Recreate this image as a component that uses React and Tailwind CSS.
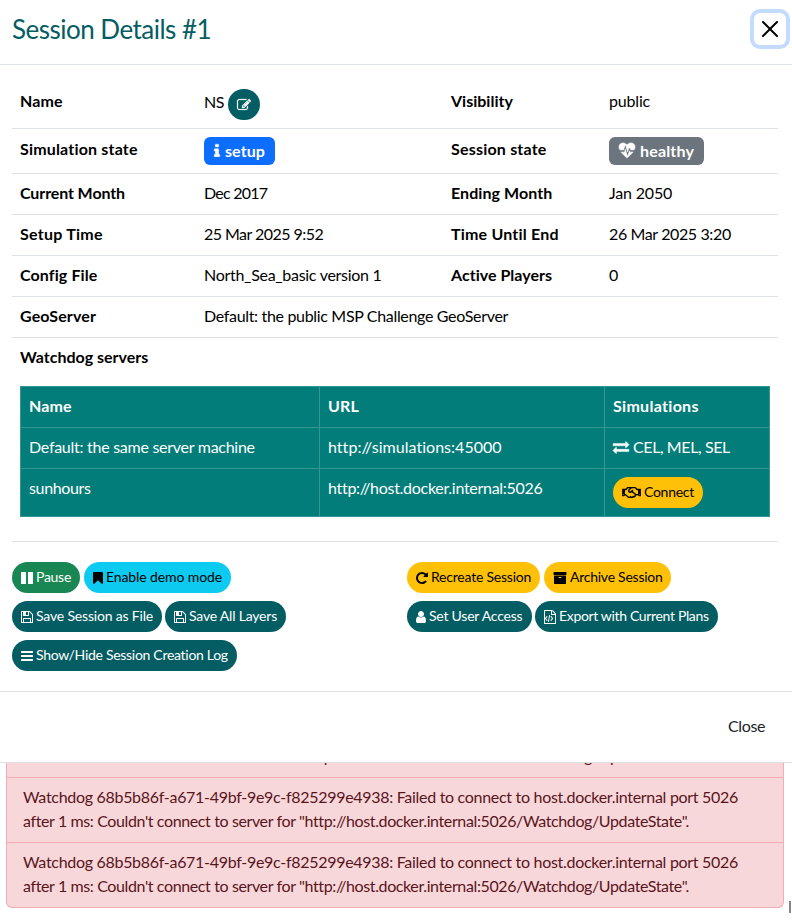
import React from "react";
import { FaRegHandshake } from "react-icons/fa";

const ICONS = {
  edit: { stroke: 30, box: "0 0 1792 1792", size: "w-[14px] h-[14px]", d: "M888 1184l116-116-152-152-116 116v56h96v96h56zm440-720q-16-16-33 1l-350 350q-17 17-1 33t33-1l350-350q17-17 1-33zm80 594v190q0 119-84.5 203.5t-203.5 84.5h-832q-119 0-203.5-84.5t-84.5-203.5v-832q0-119 84.5-203.5t203.5-84.5h832q63 0 117 25 15 7 18 23 3 17-9 29l-49 49q-14 14-32 8-23-6-45-6h-832q-66 0-113 47t-47 113v832q0 66 47 113t113 47h832q66 0 113-47t47-113v-126q0-13 9-22l64-64q15-15 35-7t20 29zm-96-738l288 288-672 672h-288v-288zm444 132l-92 92-288-288 92-92q28-28 68-28t68 28l152 152q28 28 28 68t-28 68z" },
  info: { stroke: 40, box: "576 0 640 1792", size: "w-[6px] h-[16px]", d: "M1216 1344v128q0 26-19 45t-45 19h-512q-26 0-45-19t-19-45v-128q0-26 19-45t45-19h64v-384h-64q-26 0-45-19t-19-45v-128q0-26 19-45t45-19h384q26 0 45 19t19 45v576h64q26 0 45 19t19 45zm-128-1152v192q0 26-19 45t-45 19h-256q-26 0-45-19t-19-45v-192q0-26 19-45t45-19h256q26 0 45 19t19 45z" },
  heart: { stroke: 70, box: "0 0 1792 1792", size: "w-[16px] h-[16px]", d: "M1280 1024h305q-5 6-10 10.5t-9 7.5l-3 4-623 600q-18 18-44 18t-44-18l-624-602q-5-2-21-20h369q22 0 39.5-13.5t22.5-34.5l70-281 190 667q6 20 23 33t39 13q21 0 38-13t23-33l146-485 56 112q18 35 57 35zm512-556q0 145-103 300h-369l-111-221q-8-17-25.5-27t-36.5-8q-45 5-56 46l-129 430-196-686q-6-20-23.5-33t-39.5-13-39 13.5-22 34.5l-116 464h-423q-103-155-103-300 0-220 127-344t351-124q62 0 126.5 21.5t120 58 95.5 68.5 76 68q36-36 76-68t95.5-68.5 120-58 126.5-21.5q224 0 351 124t127 344z" },
  exchange: { stroke: 50, box: "0 0 1792 1792", size: "w-[16px] h-[16px]", d: "M1792 1184v192q0 13-9.5 22.5t-22.5 9.5h-1376v192q0 13-9.5 22.5t-22.5 9.5q-12 0-24-10l-319-320q-9-9-9-22 0-14 9-23l320-320q9-9 23-9 13 0 22.5 9.5t9.5 22.5v192h1376q13 0 22.5 9.5t9.5 22.5zm0-544q0 14-9 23l-320 320q-9 9-23 9-13 0-22.5-9.5t-9.5-22.5v-192h-1376q-13 0-22.5-9.5t-9.5-22.5v-192q0-13 9.5-22.5t22.5-9.5h1376v-192q0-14 9-23t23-9q12 0 24 10l319 319q9 9 9 23z" },
  pause: { box: "128 0 1536 1792", size: "w-[12px] h-[14px]", d: "M1664 192v1408q0 26-19 45t-45 19h-512q-26 0-45-19t-19-45v-1408q0-26 19-45t45-19h512q26 0 45 19t19 45zm-896 0v1408q0 26-19 45t-45 19h-512q-26 0-45-19t-19-45v-1408q0-26 19-45t45-19h512q26 0 45 19t19 45z" },
  bookmark: { box: "256 0 1280 1792", size: "w-[10px] h-[14px]", d: "M1420 128q23 0 44 9 33 13 52.5 41t19.5 62v1289q0 34-19.5 62t-52.5 41q-19 8-44 8-48 0-83-32l-441-424-441 424q-36 33-83 33-23 0-44-9-33-13-52.5-41t-19.5-62v-1289q0-34 19.5-62t52.5-41q21-9 44-9h1048z" },
  save: { box: "128 0 1536 1792", size: "w-[12px] h-[14px]", d: "M512 1536h768v-384h-768v384zm896 0h128v-896q0-14-10-38.5t-20-34.5l-281-281q-10-10-34-20t-39-10v416q0 40-28 68t-68 28h-576q-40 0-68-28t-28-68v-416h-128v1280h128v-416q0-40 28-68t68-28h832q40 0 68 28t28 68v416zm-384-928v-320q0-13-9.5-22.5t-22.5-9.5h-192q-13 0-22.5 9.5t-9.5 22.5v320q0 13 9.5 22.5t22.5 9.5h192q13 0 22.5-9.5t9.5-22.5zm640 32v928q0 40-28 68t-68 28h-1344q-40 0-68-28t-28-68v-1344q0-40 28-68t68-28h928q40 0 88 20t76 48l280 280q28 28 48 76t20 88z" },
  bars: { box: "128 0 1536 1792", size: "w-[12px] h-[14px]", d: "M1664 1344v128q0 26-19 45t-45 19h-1408q-26 0-45-19t-19-45v-128q0-26 19-45t45-19h1408q26 0 45 19t19 45zm0-512v128q0 26-19 45t-45 19h-1408q-26 0-45-19t-19-45v-128q0-26 19-45t45-19h1408q26 0 45 19t19 45zm0-512v128q0 26-19 45t-45 19h-1408q-26 0-45-19t-19-45v-128q0-26 19-45t45-19h1408q26 0 45 19t19 45z" },
  repeat: { box: "128 0 1536 1792", size: "w-[12px] h-[14px]", d: "M1664 256v448q0 26-19 45t-45 19h-448q-42 0-59-40-17-39 14-69l138-138q-148-137-349-137-104 0-198.5 40.5t-163.5 109.5-109.5 163.5-40.5 198.5 40.5 198.5 109.5 163.5 163.5 109.5 198.5 40.5q119 0 225-52t179-147q7-10 23-12 15 0 25 9l137 138q9 8 9.5 20.5t-7.5 22.5q-109 132-264 204.5t-327 72.5q-156 0-298-61t-245-164-164-245-61-298 61-298 164-245 245-164 298-61q147 0 284.5 55.5t244.5 156.5l130-129q29-31 70-14 39 17 39 59z" },
  archive: { box: "0 0 1792 1792", size: "w-[14px] h-[14px]", d: "M1088 832q0-26-19-45t-45-19h-256q-26 0-45 19t-19 45 19 45 45 19h256q26 0 45-19t19-45zm576-192v960q0 26-19 45t-45 19h-1408q-26 0-45-19t-19-45v-960q0-26 19-45t45-19h1408q26 0 45 19t19 45zm64-448v256q0 26-19 45t-45 19h-1536q-26 0-45-19t-19-45v-256q0-26 19-45t45-19h1536q26 0 45 19t19 45z" },
  user: { box: "256 0 1280 1792", size: "w-[10px] h-[14px]", d: "M1536 1399q0 109-62.5 187t-150.5 78h-854q-88 0-150.5-78t-62.5-187q0-85 8.5-160.5t31.5-152 58.5-131 94-89 134.5-34.5q131 128 313 128t313-128q76 0 134.5 34.5t94 89 58.5 131 31.5 152 8.5 160.5zm-256-887q0 159-112.5 271.5t-271.5 112.5-271.5-112.5-112.5-271.5 112.5-271.5 271.5-112.5 271.5 112.5 112.5 271.5z" },
  code: { box: "128 0 1536 1792", size: "w-[12px] h-[14px]", d: "M1596 380q28 28 48 76t20 88v1152q0 40-28 68t-68 28h-1344q-40 0-68-28t-28-68v-1600q0-40 28-68t68-28h896q40 0 88 20t76 48zm-444-244v376h376q-10-29-22-41l-313-313q-12-12-41-22zm384 1528v-1024h-416q-40 0-68-28t-28-68v-416h-768v1536h1280zm-1056-896q8-11 21-12.5t24 6.5l51 38q11 8 12.5 21t-6.5 24l-182 243 182 243q8 11 6.5 24t-12.5 21l-51 38q-11 8-24 6.5t-21-12.5l-226-301q-14-19 0-38zm802 301q14 19 0 38l-226 301q-8 11-21 12.5t-24-6.5l-51-38q-11-8-12.5-21t6.5-24l182-243-182-243q-8-11-6.5-24t12.5-21l51-38q11-8 24-6.5t21 12.5zm-620 461q-13-2-20.5-13t-5.5-24l138-831q2-13 13-20.5t24-5.5l63 10q13 2 20.5 13t5.5 24l-138 831q-2 13-13 20.5t-24 5.5z" },
};

function Icon({ name }) {
  const icon = ICONS[name];
  return (
    <svg
      viewBox={icon.box}
      className={`${icon.size} shrink-0 overflow-visible`}
      fill="currentColor"
      stroke="currentColor"
      strokeWidth={icon.stroke || 0}
      aria-hidden="true"
    >
      <path d={icon.d} />
    </svg>
  );
}

function Row({ children, className = "[&>*]:pt-[7px] [&>*]:pb-[9px]" }) {
  return (
    <div className={`grid grid-cols-[184px_247px_158px_177px] border-b border-[#dee2e6] [&>*]:px-2 ${className}`}>
      {children}
    </div>
  );
}

function Pill({ icon, label, className }) {
  return (
    <button className={`flex h-[31px] items-center gap-[3px] whitespace-nowrap rounded-full pl-[9px] text-[14px] leading-[21px] ${className}`}>
      <Icon name={icon} />
      <span className="pb-[2px]">{label}</span>
    </button>
  );
}

const ALERT_SECOND = 'after 1 ms: Couldn\'t connect to server for "http://host.docker.internal:5026/Watchdog/UpdateState".';

function Alert() {
  return (
    <li className="h-[65px] border-t border-[#f1aeb5] px-4 pt-[7px]">
      <div className="tracking-[-0.297px]">
        Watchdog 68b5b86f-a671-49bf-9e9c-f825299e4938: Failed to connect to host.docker.internal port 5026
      </div>
      <div className="tracking-[-0.38px]">{ALERT_SECOND}</div>
    </li>
  );
}

export default function App() {
  return (
    <div className="relative h-[924px] w-[792px] overflow-hidden bg-white font-['Lato',sans-serif] text-[16px] leading-6 text-black">
      <section className="flex h-[763px] flex-col border-b border-[#dee2e6]">
        <header className="flex h-[65px] items-start justify-between border-b border-[#dee2e6] pl-3 pr-[6px]">
          <h1 className="pt-[13px] text-[26px] leading-8 tracking-[-0.51px] text-[#045d62]">Session Details #1</h1>
          <button aria-label="Close" className="mt-[13px] flex h-8 w-8 items-center justify-center rounded-[6px] ring-4 ring-[#c2dbfe]">
            <svg viewBox="0 0 16 16" className="h-4 w-4" fill="#000">
              <path d="M.293.293a1 1 0 0 1 1.414 0L8 6.586 14.293.293a1 1 0 1 1 1.414 1.414L9.414 8l6.293 6.293a1 1 0 0 1-1.414 1.414L8 9.414l-6.293 6.293a1 1 0 0 1-1.414-1.414L6.586 8 .293 1.707a1 1 0 0 1 0-1.414z" />
            </svg>
          </button>
        </header>

        <div className="flex-1 pl-[12px] pr-[14px] pt-4">
          <Row className="[&>*]:py-2">
            <div className="font-bold tracking-[0.08px]">Name</div>
            <div className="flex items-start gap-1">
              <span className="w-5 pt-px tracking-[-0.45px]">NS</span>
              <button aria-label="Edit" className="flex h-[31px] w-8 items-center justify-center rounded-full bg-[#045d62] text-white">
                <Icon name="edit" />
              </button>
            </div>
            <div className="font-bold">Visibility</div>
            <div className="tracking-[-0.18px]">public</div>
          </Row>
          <Row className="[&>*]:py-2">
            <div className="font-bold tracking-[0.18px]">Simulation state</div>
            <div>
              <span className="flex h-7 w-[71px] items-center gap-[5px] rounded-[6px] bg-[#0d6efd] pl-[10px] font-bold text-white">
                <Icon name="info" />
                <span className="tracking-[0.09px]">setup</span>
              </span>
            </div>
            <div className="font-bold tracking-[0.2px]">Session state</div>
            <div>
              <span className="flex h-7 w-[95px] items-center gap-[5px] rounded-[6px] bg-[#6c757d] pl-[10px] font-bold text-white">
                <Icon name="heart" />
                <span className="tracking-[0.16px]">healthy</span>
              </span>
            </div>
          </Row>
          <Row>
            <div className="font-bold tracking-[-0.11px]">Current Month</div>
            <div className="tracking-[-0.75px]">Dec 2017</div>
            <div className="font-bold tracking-[0.08px]">Ending Month</div>
            <div className="tracking-[-0.17px]">Jan 2050</div>
          </Row>
          <Row>
            <div className="font-bold tracking-[0.26px]">Setup Time</div>
            <div className="tracking-[-0.54px]">25 Mar 2025 9:52</div>
            <div className="font-bold tracking-[0.2px]">Time Until End</div>
            <div className="tracking-[-0.38px]">26 Mar 2025 3:20</div>
          </Row>
          <Row>
            <div className="font-bold tracking-[0.11px]">Config File</div>
            <div className="tracking-[-0.29px]">North_Sea_basic version 1</div>
            <div className="font-bold tracking-[0.03px]">Active Players</div>
            <div className="pl-[9px]">0</div>
          </Row>
          <Row>
            <div className="font-bold tracking-[0.11px]">GeoServer</div>
            <div className="col-span-3 tracking-[-0.325px]">Default: the public MSP Challenge GeoServer</div>
          </Row>
          <div className="border-b border-[#dee2e6] px-2 pb-6 pt-[7px]">
            <div className="font-bold">Watchdog servers</div>
            <table className="mt-[17px] w-[750px] table-fixed border-collapse bg-[#037d79] text-left text-white [&_td]:border [&_td]:border-[#359794] [&_td]:px-2 [&_td]:pb-[9px] [&_td]:pt-[7px] [&_td]:align-top [&_th]:border [&_th]:border-[#359794] [&_th]:px-2 [&_th]:pb-[9px] [&_th]:pt-[7px]">
              <colgroup>
                <col className="w-[299px]" />
                <col className="w-[285px]" />
                <col className="w-[165px]" />
              </colgroup>
              <tbody>
                <tr className="h-[41px]">
                  <th className="tracking-[0.08px]">Name</th>
                  <th className="tracking-[0.17px]">URL</th>
                  <th className="tracking-[0.3px]">Simulations</th>
                </tr>
                <tr className="h-[41px]">
                  <td className="tracking-[-0.27px]">Default: the same server machine</td>
                  <td className="tracking-[0.03px]">http://simulations:45000</td>
                  <td>
                    <span className="flex items-center gap-1 tracking-[-0.4px]">
                      <Icon name="exchange" />
                      CEL, MEL, SEL
                    </span>
                  </td>
                </tr>
                <tr>
                  <td className="tracking-[-0.36px]">sunhours</td>
                  <td className="tracking-[-0.29px]">http://host.docker.internal:5026</td>
                  <td>
                    <button className="mb-[-1px] mt-px flex h-[31px] w-[90px] items-center gap-[3px] rounded-full bg-[#ffc107] pl-[9px] text-[14px] tracking-[-0.27px] text-black">
                      <FaRegHandshake className="h-[15px] w-[19px] shrink-0" />
                      <span className="pb-[2px]">Connect</span>
                    </button>
                  </td>
                </tr>
              </tbody>
            </table>
          </div>

          <div className="flex pt-5">
            <div className="flex w-[395px] flex-col gap-2">
              <div className="flex gap-1">
                <Pill icon="pause" label="Pause" className="w-[68px] bg-[#198754] tracking-[-0.28px] text-white" />
                <Pill icon="bookmark" label="Enable demo mode" className="w-[147px] bg-[#0dcaf0] tracking-[-0.11px] text-black" />
              </div>
              <div className="flex gap-[3px]">
                <Pill icon="save" label="Save Session as File" className="w-[150px] bg-[#045d62] tracking-[-0.18px] text-white" />
                <Pill icon="save" label="Save All Layers" className="w-[121px] bg-[#045d62] tracking-[-0.2px] text-white" />
              </div>
              <Pill icon="bars" label="Show/Hide Session Creation Log" className="w-[225px] bg-[#045d62] tracking-[-0.29px] text-white" />
            </div>
            <div className="flex flex-col gap-2">
              <div className="flex gap-1">
                <Pill icon="repeat" label="Recreate Session" className="w-[133px] bg-[#ffc107] tracking-[-0.22px] text-black" />
                <Pill icon="archive" label="Archive Session" className="w-[127px] bg-[#ffc107] tracking-[-0.25px] text-black" />
              </div>
              <div className="flex gap-[3px]">
                <Pill icon="user" label="Set User Access" className="w-[125px] bg-[#045d62] tracking-[-0.23px] text-white" />
                <Pill icon="code" label="Export with Current Plans" className="w-[183px] bg-[#045d62] tracking-[-0.34px] text-white" />
              </div>
            </div>
          </div>
        </div>

        <footer className="flex h-[71px] items-center justify-end border-t border-[#dee2e6] pb-[2px] pr-[27px] tracking-[-0.38px] text-[#212529]">
          <button>Close</button>
        </footer>
      </section>

      <ul className="ml-[6px] w-[778px] overflow-hidden rounded-b-[6px] border-x border-b border-[#f1aeb5] bg-[#f8d7da] text-[#58151c]">
        <li className="flex h-[14px] items-end overflow-hidden px-4 pb-[9px] tracking-[-0.38px]">{ALERT_SECOND}</li>
        <Alert />
        <Alert />
      </ul>
      <div className="absolute left-[789px] top-[901px] h-3 w-[2px] bg-[#868686]" />
    </div>
  );
}
